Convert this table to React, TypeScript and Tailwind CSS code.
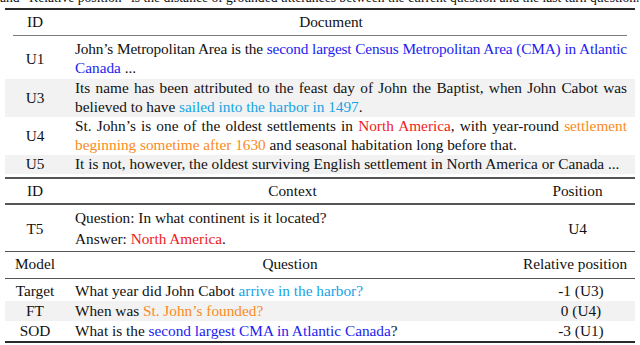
import React from "react";

const B = ({ children }: { children: React.ReactNode }) => <span className="text-[#1c1cf2]">{children}</span>;
const C = ({ children }: { children: React.ReactNode }) => <span className="text-[#14a4e6]">{children}</span>;
const R = ({ children }: { children: React.ReactNode }) => <span className="text-[#f21a1a]">{children}</span>;
const O = ({ children }: { children: React.ReactNode }) => <span className="text-[#fa8a1e]">{children}</span>;

const Full = ({ children }: { children: React.ReactNode }) => (
  <div className="text-justify [text-align-last:justify] whitespace-nowrap">{children}</div>
);
const Tight = ({ children }: { children: React.ReactNode }) => (
  <div className="text-justify [text-align-last:justify] whitespace-nowrap tracking-[-0.16px]">{children}</div>
);
const Last = ({ children }: { children: React.ReactNode }) => <div className="whitespace-nowrap">{children}</div>;

export default function App() {
  return (
    <div
      className="w-[640px] h-[345px] overflow-hidden bg-white text-[#111] text-[15.3px] leading-[18.5px]"
      style={{ fontFamily: '"Liberation Serif", "Times New Roman", serif' }}
    >
      {/* caption tail */}
      <div className="h-[8px] overflow-hidden">
        <div className="-mt-[11px] whitespace-nowrap text-[13.6px]">
          and “Relative position” is the distance of grounded utterances between the current question and the last turn question.
        </div>
      </div>

      <div className="ml-[5px] w-[630px]">
        {/* Table 1 */}
        <div className="h-[2px] bg-[#2a2a2a]" />
        <div className="flex h-[25px] pt-[3px]">
          <div className="w-[60px] text-center">ID</div>
          <div className="w-[522px] pl-[10px] text-center">Document</div>
        </div>
        <div className="h-px mx-[8px] bg-[#7a7a7a]" />

        <div className="flex h-[43px] pt-[4px]">
          <div className="w-[60px] flex items-center justify-center">U1</div>
          <div className="ml-[10px] w-[552px]">
            <Tight>
              John’s Metropolitan Area is the <B>second largest Census Metropolitan Area (CMA) in Atlantic</B>
            </Tight>
            <Last>
              <B>Canada</B> ...
            </Last>
          </div>
        </div>

        <div className="flex h-[38px] bg-[#f2f2f2]">
          <div className="w-[60px] flex items-center justify-center">U3</div>
          <div className="ml-[10px] w-[552px]">
            <Full>Its name has been attributed to the feast day of John the Baptist, when John Cabot was</Full>
            <Last>
              believed to have <C>sailed into the harbor in 1497</C>.
            </Last>
          </div>
        </div>

        <div className="flex h-[38px]">
          <div className="w-[60px] flex items-center justify-center">U4</div>
          <div className="ml-[10px] w-[552px]">
            <Full>
              St. John’s is one of the oldest settlements in <R>North America</R>, with year-round <O>settlement</O>
            </Full>
            <Last>
              <O>beginning sometime after 1630</O> and seasonal habitation long before that.
            </Last>
          </div>
        </div>

        <div className="flex h-[19px] bg-[#f2f2f2]">
          <div className="w-[60px] flex items-center justify-center">U5</div>
          <div className="ml-[10px] w-[552px]">
            <Last>It is not, however, the oldest surviving English settlement in North America or Canada ...</Last>
          </div>
        </div>

        {/* Table 2 */}
        <div className="h-[3px]" />
        <div className="h-[2px] bg-[#555]" />
        <div className="flex h-[24px] pt-[2.5px]">
          <div className="w-[60px] text-center">ID</div>
          <div className="w-[455px] text-center">Context</div>
          <div className="w-[115px] text-center">Position</div>
        </div>
        <div className="h-[1.5px] bg-[#555]" />
        <div className="flex h-[46px] pt-[2px] leading-[21px]">
          <div className="w-[60px] flex items-center justify-center">T5</div>
          <div className="w-[455px] pl-[10px]">
            <div>Question: In what continent is it located?</div>
            <div>
              Answer: <R>North America</R>.
            </div>
          </div>
          <div className="w-[115px] flex items-center justify-center">U4</div>
        </div>
        <div className="h-[1.5px] bg-[#555]" />

        {/* Table 3 */}
        <div className="flex h-[25.5px] pt-[3px]">
          <div className="w-[60px] text-center">Model</div>
          <div className="w-[450px] text-center">Question</div>
          <div className="w-[120px] text-center">Relative position</div>
        </div>
        <div className="h-[1.5px] bg-[#555]" />
        <div className="flex h-[21.5px] pt-[3px]">
          <div className="w-[60px] text-center">Target</div>
          <div className="w-[450px] pl-[10px]">
            What year did John Cabot <C>arrive in the harbor?</C>
          </div>
          <div className="w-[120px] pl-[12px] text-center">-1 (U3)</div>
        </div>
        <div className="flex h-[20px] pt-[1px] bg-[#f2f2f2]">
          <div className="w-[60px] text-center">FT</div>
          <div className="w-[450px] pl-[10px]">
            When was <O>St. John’s founded?</O>
          </div>
          <div className="w-[120px] pl-[12px] text-center">0 (U4)</div>
        </div>
        <div className="flex h-[20px] pt-[1px]">
          <div className="w-[60px] text-center">SOD</div>
          <div className="w-[450px] pl-[10px]">
            What is the <B>second largest CMA in Atlantic Canada</B>?
          </div>
          <div className="w-[120px] pl-[12px] text-center">-3 (U1)</div>
        </div>
        <div className="h-[0.5px]" />
        <div className="h-[2px] bg-[#2a2a2a]" />
      </div>
    </div>
  );
}
